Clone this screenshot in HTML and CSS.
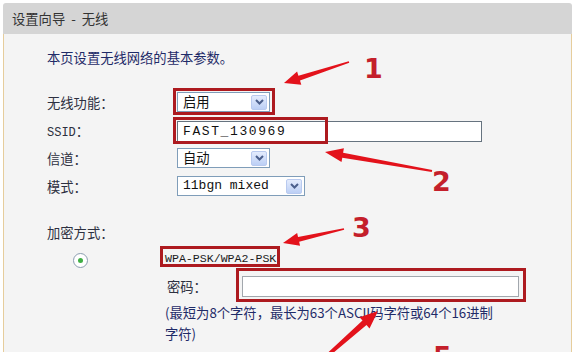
FILE: index.html
```html
<!DOCTYPE html>
<html lang="zh-CN">
  <head>
    <meta charset="UTF-8" />
    <meta name="viewport" content="width=device-width, initial-scale=1.0" />
    <title>设置向导 - 无线</title>
    <link rel="stylesheet" href="styles.css">
  </head>
  <body>
    <div class="page">
      <div class="panel">
        <div class="panel-head">设置向导&nbsp; -&nbsp; 无线</div>
        <div class="panel-body">
          <p class="intro">本页设置无线网络的基本参数。</p>

          <div class="form-row">
            <span class="label">无线功能：</span>
            <div class="select short">
              <span class="value">启用</span>
              <span class="drop"><svg width="9" height="6" viewBox="0 0 9 6"><path d="M1 1 L4.5 4.5 L8 1" /></svg></span>
            </div>
          </div>
          <div class="form-row">
            <span class="label"><span class="latin">SSID</span>：</span>
            <div class="text-input ssid">FAST_130969</div>
          </div>
          <div class="form-row">
            <span class="label">信道：</span>
            <div class="select short">
              <span class="value">自动</span>
              <span class="drop"><svg width="9" height="6" viewBox="0 0 9 6"><path d="M1 1 L4.5 4.5 L8 1" /></svg></span>
            </div>
          </div>
          <div class="form-row">
            <span class="label">模式：</span>
            <div class="select wide">
              <span class="value mono">11bgn mixed</span>
              <span class="drop"><svg width="9" height="6" viewBox="0 0 9 6"><path d="M1 1 L4.5 4.5 L8 1" /></svg></span>
            </div>
          </div>

          <p class="section">加密方式：</p>
          <div class="enc-row">
            <span class="radio"><i></i></span>
            <span class="enc-name">WPA-PSK/WPA2-PSK</span>
          </div>
          <div class="pwd-row">
            <span class="pwd-label">密码：</span>
            <div class="text-input pwd"></div>
          </div>
          <p class="hint">(最短为8个字符，最长为63个ASCII码字符或64个16进制<br>字符)</p>
        </div>
      </div>

      <!-- annotation layer: red boxes, arrows and step numbers -->
      <svg class="marks" width="576" height="352" viewBox="0 0 576 352">
        <g class="box">
          <rect x="174.5" y="89.5" width="99" height="24" />
          <rect x="174.5" y="118.5" width="152" height="24" />
          <rect x="161.5" y="247.5" width="117" height="18" />
          <rect x="237.5" y="269.5" width="287" height="31" />
        </g>
        <g class="arrow">
          <polygon points="348.75,61.24 298.4,75.7 297.1,71.4 284,83 301.3,84.8 300,80.5 349.25,62.76" />
          <polygon points="432.2,170 343.1,152.7 343.9,148.3 325,152 341.5,162.1 342.3,157.7 431.8,172" />
          <polygon points="343.82,228.22 298.04,236.96 297.14,233.06 283,243 300.06,245.74 299.16,241.84 344.18,229.78" />
          <polygon points="321,363.1 366.5,325.1 369.5,328.5 378,311 359.5,317.3 362.5,320.6 319,360.9" />
        </g>
        <g class="num">
          <text x="364" y="78">1</text>
          <text x="432" y="191">2</text>
          <text x="352" y="237">3</text>
          <text x="433" y="366">5</text>
        </g>
      </svg>
    </div>
  </body>
</html>
```

FILE: styles.css
```css
body {
  margin: 0;
  background-color: #ffffff;
  font-family: "Noto Sans CJK SC", "Liberation Sans", sans-serif;
  font-size: 13.3px;
  color: #2d3040;
  overflow: hidden;
}

.page {
  position: relative;
  width: 576px;
  height: 352px;
  padding: 3px 0 0 3px;
  box-sizing: border-box;
}

.panel {
  width: 569px;
}

.panel-head {
  height: 31px;
  line-height: 31px;
  padding-left: 9px;
  background-color: #d5d5d5;
  border-radius: 3px 3px 0 0;
  color: #333;
}

.panel-body {
  height: 330px;
  padding: 14px 0 0 43px;
  background-color: #f4f4f4;
  border-left: 1px solid #e6cd9c;
  border-right: 1px solid #e6cd9c;
  box-sizing: border-box;
}

p {
  margin: 0;
}

.intro {
  line-height: 20px;
  color: #1f2b68;
  margin-bottom: 20px;
}

.form-row {
  display: flex;
  align-items: center;
  height: 28px;
}

.label {
  width: 130px;
  flex-shrink: 0;
}

.latin {
  font-family: "Liberation Mono", monospace;
  font-size: 12px;
}

/* fake select boxes, XP look */
.select {
  display: flex;
  align-items: center;
  justify-content: space-between;
  height: 20px;
  padding: 0 2px 0 5px;
  background-color: #fff;
  border: 1px solid #7f9db9;
  box-sizing: border-box;
}

.select.short {
  width: 93px;
}

.select.wide {
  width: 128px;
}

.value {
  line-height: 18px;
  color: #111;
}

.mono {
  font-family: "Liberation Mono", monospace;
  font-size: 13px;
}

.drop {
  display: flex;
  align-items: center;
  justify-content: center;
  width: 16px;
  height: 15px;
  border: 1px solid #b9caef;
  border-radius: 2px;
  background: linear-gradient(#e4ecfd, #bccff5);
  box-sizing: border-box;
}

.drop path {
  fill: none;
  stroke: #4b5f8c;
  stroke-width: 2;
}

.text-input {
  height: 21px;
  background-color: #fff;
  box-sizing: border-box;
}

.ssid {
  width: 305px;
  margin-top: 2px;
  padding-left: 5px;
  line-height: 19px;
  border: 1px solid #66737f;
  font-family: "Liberation Mono", monospace;
  font-size: 13px;
  letter-spacing: 1.6px;
  color: #111;
}

.section {
  margin-top: 23px;
  line-height: 20px;
}

.enc-row {
  display: flex;
  align-items: center;
  height: 24px;
  margin-top: 3px;
  padding-left: 26px;
}

.radio {
  display: flex;
  align-items: center;
  justify-content: center;
  width: 13px;
  height: 13px;
  margin-top: 4px;
  border: 1px solid #8b9db0;
  border-radius: 50%;
  background-color: #fff;
}

.radio i {
  width: 5px;
  height: 5px;
  border-radius: 50%;
  background-color: #3fae44;
}

.enc-name {
  margin-left: 77px;
  white-space: nowrap;
  font-family: "Liberation Mono", monospace;
  font-size: 11.6px;
  color: #1a1a1a;
}

.pwd-row {
  display: flex;
  align-items: center;
  height: 32px;
  padding-left: 120px;
}

.pwd-label {
  width: 75px;
}

.pwd {
  width: 277px;
  border: 1px solid #a2a7ad;
}

.hint {
  padding-left: 118px;
  line-height: 21px;
  color: #1f2b68;
}

/* annotation overlay */
.marks {
  position: absolute;
  top: 0;
  left: 0;
  pointer-events: none;
}

.box rect {
  fill: none;
  stroke: #ad1a1f;
  stroke-width: 3;
}

.arrow polygon {
  fill: #e3121b;
}

.num text {
  font-family: "DejaVu Sans", sans-serif;
  font-size: 27px;
  font-weight: bold;
  fill: #c41f2b;
}
```
